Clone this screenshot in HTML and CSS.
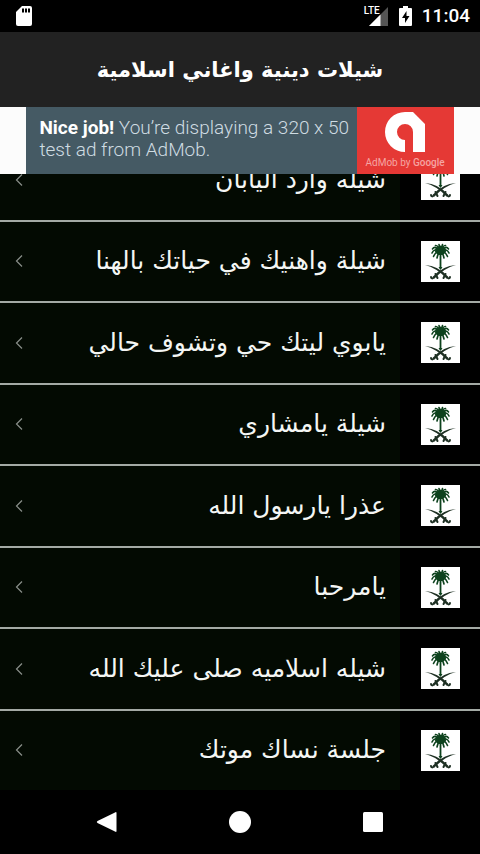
FILE: index.html
```html
<!DOCTYPE html>
<html lang="ar" dir="rtl">
<head>
<meta charset="utf-8">
<meta name="viewport" content="width=device-width, initial-scale=1">
<title>شيلات دينية واغاني اسلامية</title>
<link rel="stylesheet" href="styles.css">
</head>
<body>
<svg class="sprite" aria-hidden="true">
  <symbol id="emblem" viewBox="0 0 39 41">
    <rect width="39" height="41" fill="#fff"/>
    <g fill="none" stroke="#0d421d" stroke-linecap="round">
      <path d="M19.500 9V27" stroke-width="1.800"/>
      <g stroke-width="1.600">
        <path d="M19.500 10Q14 4 11.500 8"/><path d="M19.500 10Q25 4 27.500 8"/>
        <path d="M19.500 10Q13 7 11 12"/><path d="M19.500 10Q26 7 28 12"/>
        <path d="M19.500 10Q15 10 12.500 15.500"/><path d="M19.500 10Q24 10 26.500 15.500"/>
        <path d="M19.500 10Q17 12 16 17"/><path d="M19.500 10Q22 12 23 17"/>
        <path d="M19.500 10Q17 4 14.500 4.500"/><path d="M19.500 10Q22 4 24.500 4.500"/>
        <path d="M19.500 10L18 3.500M19.500 10L21.500 3.500"/>
      </g>
    </g>
    <path d="M14.500 7L19.500 4.500L24.500 7L25 11L22 14L17 14L14 11Z" fill="#0d421d"/>
    <path d="M17.500 26h4l-2 3z" fill="#0d421d"/>
    <g fill="#1e3023">
      <path d="M4 24Q17 24.500 27.500 36L25.500 37.500Q15 26.500 4 24Z"/>
      <path d="M35 24Q22 24.500 11.500 36L13.500 37.500Q24 26.500 35 24Z"/>
    </g>
    <g fill="none" stroke="#1e3023" stroke-width="2" stroke-linecap="round">
      <path d="M14.500 33L16.500 37M13 36.500Q10.500 38.500 10 36"/>
      <path d="M24.500 33L22.500 37M26 36.500Q28.500 38.500 29 36"/>
    </g>
  </symbol>
  <symbol id="chevron" viewBox="0 0 8 14">
    <path d="M7 1.500L1.500 7L7 12.500" fill="none" stroke="#8a8f8a" stroke-width="1.200"/>
  </symbol>
</svg>

<div class="status" dir="ltr">
  <svg class="sd" viewBox="0 0 16 20" role="img" aria-label="SD card"><path d="M6 0H14Q16 0 16 2V18Q16 20 14 20H2Q0 20 0 18V6Z" fill="#fff"/><path d="M6 2.500h2v4H6zM9 2.500h2v4H9zM12 2.500h2v4h-2z" fill="#000"/></svg>
  <div class="network">
    <span class="lte">LTE</span>
    <svg class="signal" viewBox="0 0 19 19" role="img" aria-label="Signal"><path d="M19 0V19H0Z" fill="#555"/><path d="M11.500 7.500V19H0Z" fill="#fff"/></svg>
  </div>
  <svg class="battery" viewBox="0 0 13 20" role="img" aria-label="Charging"><path d="M4 0h5v2h3q1 0 1 1v16q0 1-1 1H1q-1 0-1-1V3q0-1 1-1h3z" fill="#fff"/><path d="M7.500 5L3 12h3v5l4.500-7h-3z" fill="#000"/></svg>
  <time class="clock">11:04</time>
</div>

<header class="toolbar"><h1>شيلات دينية واغاني اسلامية</h1></header>

<aside class="ad-strip">
  <a class="ad" href="#" dir="ltr" lang="en">
    <span class="ad-text">
      <span class="ad-line"><strong>Nice job!</strong> <span>You’re displaying a 320 x 50</span></span>
      <span class="ad-line">test ad from AdMob.</span>
    </span>
    <span class="ad-brand">
      <svg class="ad-logo" viewBox="0 0 40 40" aria-hidden="true"><path d="M20 0H28L40 12V40H28V20A8 8 0 1 0 20 28V40A20 20 0 0 1 20 0Z" fill="#fff"/></svg>
      <span class="ad-name">AdMob by <b>Google</b></span>
    </span>
  </a>
</aside>

<main class="content">
  <ul class="tracks">
    <li><a class="track" href="#"><span class="thumb"><svg class="emblem"><use href="#emblem"/></svg></span><span class="name">شيله وارد اليابان</span><svg class="chevron"><use href="#chevron"/></svg></a></li>
    <li><a class="track" href="#"><span class="thumb"><svg class="emblem"><use href="#emblem"/></svg></span><span class="name">شيلة واهنيك في حياتك بالهنا</span><svg class="chevron"><use href="#chevron"/></svg></a></li>
    <li><a class="track" href="#"><span class="thumb"><svg class="emblem"><use href="#emblem"/></svg></span><span class="name">يابوي ليتك حي وتشوف حالي</span><svg class="chevron"><use href="#chevron"/></svg></a></li>
    <li><a class="track" href="#"><span class="thumb"><svg class="emblem"><use href="#emblem"/></svg></span><span class="name">شيلة يامشاري</span><svg class="chevron"><use href="#chevron"/></svg></a></li>
    <li><a class="track" href="#"><span class="thumb"><svg class="emblem"><use href="#emblem"/></svg></span><span class="name">عذرا يارسول الله</span><svg class="chevron"><use href="#chevron"/></svg></a></li>
    <li><a class="track" href="#"><span class="thumb"><svg class="emblem"><use href="#emblem"/></svg></span><span class="name">يامرحبا</span><svg class="chevron"><use href="#chevron"/></svg></a></li>
    <li><a class="track" href="#"><span class="thumb"><svg class="emblem"><use href="#emblem"/></svg></span><span class="name">شيله اسلاميه صلى عليك الله</span><svg class="chevron"><use href="#chevron"/></svg></a></li>
    <li><a class="track" href="#"><span class="thumb"><svg class="emblem"><use href="#emblem"/></svg></span><span class="name">جلسة نساك موتك</span><svg class="chevron"><use href="#chevron"/></svg></a></li>
  </ul>
</main>

<nav class="system" dir="ltr">
  <button type="button" aria-label="Back"><svg viewBox="0 0 22 22"><path d="M19 1.500Q20.500 .5 20.500 2V20Q20.500 21.500 19 20.500L1.500 12Q0 11 1.500 10Z" fill="#fff"/></svg></button>
  <button type="button" aria-label="Home"><svg viewBox="0 0 22 22"><circle cx="11" cy="11" r="11" fill="#fff"/></svg></button>
  <button type="button" aria-label="Recent apps"><svg viewBox="0 0 22 22"><rect x="1" y="1" width="20" height="20" rx="1.500" fill="#fff"/></svg></button>
</nav>
</body>
</html>
```
FILE: styles.css
```css
* {
  box-sizing: border-box;
}

body {
  margin: 0;
  min-height: 100vh;
  display: flex;
  flex-direction: column;
  background: #000;
  color: #fff;
  font-family: Roboto, sans-serif;
}

a {
  color: inherit;
  text-decoration: none;
}

.sprite {
  display: none;
}

.status {
  display: flex;
  align-items: center;
  height: 32px;
  padding: 0 10px 0 16px;
}

.sd {
  width: 16px;
  height: 20px;
}

.network {
  display: flex;
  align-items: flex-end;
  margin-left: auto;
  height: 20px;
  position: relative;
}

.lte {
  position: absolute;
  top: 0;
  right: 8px;
  font-size: 10px;
  line-height: 10px;
  font-weight: 500;
}

.signal {
  width: 19px;
  height: 19px;
}

.battery {
  width: 13px;
  height: 20px;
  margin: 0 10px 0 11px;
}

.clock {
  font-size: 19px;
  font-weight: 500;
  line-height: 24px;
}

.toolbar {
  display: flex;
  align-items: center;
  justify-content: center;
  height: 75px;
  background: #222;
}

h1 {
  margin: 0;
  font-family: "DejaVu Sans", sans-serif;
  font-size: 21px;
  font-weight: 700;
  line-height: 32px;
}

.ad-strip {
  display: flex;
  justify-content: center;
  background: #fcfcfc;
}

.ad {
  display: flex;
  width: 89%;
  min-height: 67px;
  background: #455a64;
}

.ad-text {
  flex: 1;
  padding: 10px 0 12px 13px;
  color: #cfdce2;
  font-size: 19px;
  font-weight: 300;
  line-height: 22px;
}

.ad-line {
  display: block;
}

.ad-text strong {
  color: #fff;
  font-weight: 700;
}

.ad-brand {
  display: flex;
  flex-direction: column;
  align-items: center;
  justify-content: space-between;
  width: 97px;
  padding: 5px 0;
  background: #e53935;
}

.ad-logo {
  width: 40px;
  height: 40px;
}

.ad-name {
  color: #f5a5a3;
  font-size: 10px;
  line-height: 12px;
}

.ad-name b {
  font-weight: 500;
}

.content {
  flex: 1;
  display: flex;
  overflow: hidden;
}

.tracks {
  flex: 1;
  display: grid;
  grid-auto-rows: 1fr;
  margin: -36px 0 0;
  padding: 0;
  list-style: none;
}

.tracks li {
  display: flex;
  border-top: 2px solid #a4aaa5;
}

.track {
  flex: 1;
  display: flex;
  align-items: center;
  min-height: 64px;
  padding-left: 15px;
  background: #030a02;
}

.thumb {
  display: flex;
  align-self: stretch;
  align-items: center;
  justify-content: center;
  width: 80px;
  background: #000;
}

.emblem {
  width: 39px;
  height: 41px;
}

.name {
  flex: 1;
  padding-right: 14px;
  color: #f4f6f4;
  font-family: "DejaVu Sans", sans-serif;
  font-size: 25px;
  line-height: 36px;
}

.chevron {
  width: 8px;
  height: 14px;
}

.system {
  display: flex;
  align-items: center;
  justify-content: center;
  gap: 87px;
  height: 64px;
}

.system button {
  display: flex;
  align-items: center;
  justify-content: center;
  width: 46px;
  height: 46px;
  padding: 0;
  border: 0;
  background: none;
}

.system svg {
  width: 22px;
  height: 22px;
}
```
